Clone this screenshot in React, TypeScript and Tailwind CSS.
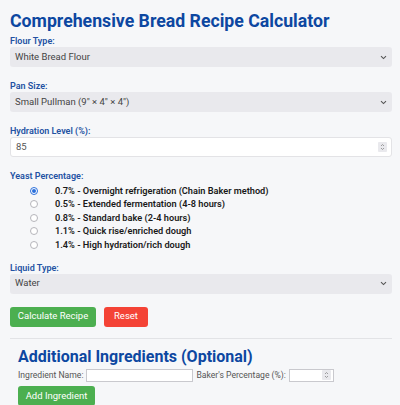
import { useState } from "react";

const yeastOptions = [
    "0.7% - Overnight refrigeration (Chain Baker method)",
    "0.5% - Extended fermentation (4-8 hours)",
    "0.8% - Standard bake (2-4 hours)",
    "1.1% - Quick rise/enriched dough",
    "1.4% - High hydration/rich dough",
];

function Chevron() {
    return (
        <svg width="7" height="5" viewBox="0 0 7 5" className="text-[#555]">
            <path d="M1 1.2 L3.5 3.6 L6 1.2" fill="none" stroke="currentColor" strokeWidth="1.1" />
        </svg>
    );
}

function Spinner() {
    return (
        <span className="flex flex-col items-center justify-center w-[9px] h-[10px] bg-[#e9e9ed] rounded-[1px]">
            <svg width="5" height="8" viewBox="0 0 5 8" className="text-[#888]">
                <path d="M1 3 L2.5 1.5 L4 3 M1 5 L2.5 6.5 L4 5" fill="none" stroke="currentColor" strokeWidth="0.8" />
            </svg>
        </span>
    );
}

function FakeSelect({ value }: { value: string }) {
    return (
        <div className="flex items-center justify-between h-[20px] w-full bg-[#e9e9ed] rounded-[3px] pl-[5px] pr-[5px] text-[9.5px] text-[#444]">
            <span>{value}</span>
            <Chevron />
        </div>
    );
}

function Label({ children }: { children: React.ReactNode }) {
    return (
        <div className="h-[12px] leading-[12px] text-[9px] font-semibold text-[#2352a3]">{children}</div>
    );
}

export default function App() {
    const [yeast, setYeast] = useState(0);

    return (
        <div className="min-h-screen bg-[#f6f7f9] font-['Roboto','Liberation_Sans',sans-serif]">
            <div className="px-[10px] pt-[9px] w-[402px]">
                {/* Title */}
                <h1 className="h-[26px] leading-[24px] text-[17.7px] font-bold text-[#0d47a1]">
                    Comprehensive Bread Recipe Calculator
                </h1>

                {/* Flour */}
                <div className="mb-[13px]">
                    <Label>Flour Type:</Label>
                    <FakeSelect value="White Bread Flour" />
                </div>

                {/* Pan */}
                <div className="mb-[13px]">
                    <Label>Pan Size:</Label>
                    <FakeSelect value={"Small Pullman (9\u2033 \u00d7 4\u2033 \u00d7 4\u2033)"} />
                </div>

                {/* Hydration */}
                <div className="mb-[13px]">
                    <Label>Hydration Level (%):</Label>
                    <div className="flex items-center justify-between h-[20px] w-full bg-white border border-[#e3e3e6] rounded-[3px] pl-[5px] pr-[4px] text-[9.5px] text-[#555]">
                        <span>85</span>
                        <Spinner />
                    </div>
                </div>

                {/* Yeast */}
                <div className="mb-[10px]">
                    <Label>Yeast Percentage:</Label>
                    <div className="pt-[2px]">
                        {yeastOptions.map((opt, i) => (
                            <div
                                key={opt}
                                onClick={() => setYeast(i)}
                                className="flex items-center h-[13.5px] cursor-pointer"
                            >
                                <span className="w-[45px] flex justify-center pl-[3px]">
                                    {yeast === i ? (
                                        <span className="w-[8px] h-[8px] rounded-full border border-[#2a6fdb] bg-white flex items-center justify-center">
                                            <span className="w-[4px] h-[4px] rounded-full bg-[#2a6fdb]" />
                                        </span>
                                    ) : (
                                        <span className="w-[8px] h-[8px] rounded-full border border-[#b5b5bb] bg-white" />
                                    )}
                                </span>
                                <span className="text-[9.2px] font-semibold text-[#1a1a1a]">{opt}</span>
                            </div>
                        ))}
                    </div>
                </div>

                {/* Liquid */}
                <div className="mb-[13px]">
                    <Label>Liquid Type:</Label>
                    <FakeSelect value="Water" />
                </div>

                {/* Actions */}
                <div className="flex gap-[8px] mb-[11px]">
                    <button className="h-[20px] w-[86px] bg-[#4caf50] text-white text-[9.5px] rounded-[3px]">
                        Calculate Recipe
                    </button>
                    <button className="h-[20px] w-[44px] bg-[#f44336] text-white text-[9.5px] rounded-[3px]">
                        Reset
                    </button>
                </div>

                <div className="border-t border-[#e2e3e6]" />

                {/* Additional ingredients */}
                <div className="px-[8px] pt-[8px]">
                    <h2 className="h-[22px] leading-[20px] text-[16px] font-bold text-[#0d47a1]">
                        Additional Ingredients (Optional)
                    </h2>
                    <div className="flex items-center gap-[3px] h-[13px] text-[8.6px] text-[#555]">
                        <span>Ingredient Name:</span>
                        <span className="h-[13px] w-[107px] bg-white border border-[#c9c9ce]" />
                        <span>Baker's Percentage (%):</span>
                        <span className="flex items-center justify-end h-[13px] w-[45px] bg-white border border-[#c9c9ce] pr-[2px]">
                            <Spinner />
                        </span>
                    </div>
                    <button className="h-[20px] w-[77px] bg-[#4caf50] text-white text-[9.5px] rounded-[3px]">
                        Add Ingredient
                    </button>
                </div>
            </div>
        </div>
    );
}
